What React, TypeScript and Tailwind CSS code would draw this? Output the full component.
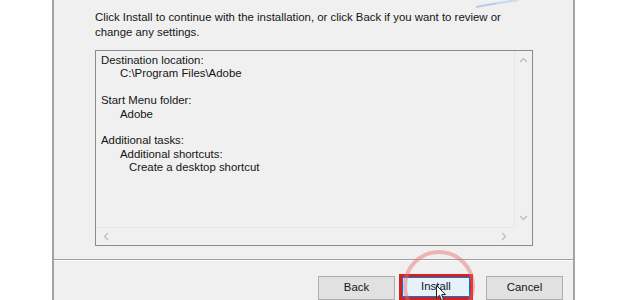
import React from "react";

const lines: { text: string; indent: number }[] = [
  { text: "Destination location:", indent: 0 },
  { text: "C:\\Program Files\\Adobe", indent: 1 },
  { text: "", indent: 0 },
  { text: "Start Menu folder:", indent: 0 },
  { text: "Adobe", indent: 1 },
  { text: "", indent: 0 },
  { text: "Additional tasks:", indent: 0 },
  { text: "Additional shortcuts:", indent: 1 },
  { text: "Create a desktop shortcut", indent: 2 },
];

const indentClass = ["pl-0", "pl-[19px]", "pl-[28px]"];

function Btn({ label, focused }: { label: string; focused?: boolean }) {
  if (focused) {
    return (
      <div className="w-[74px] h-[26px] border-[3px] border-[#d42020] flex">
        <div className="flex-1 bg-[#e5f1fb] border border-[#0078d7] flex items-center justify-center">
          {label}
        </div>
      </div>
    );
  }
  return (
    <div className="w-[77px] h-[24px] mt-[2px] bg-[#e1e1e1] border border-[#adadad] flex items-center justify-center">
      {label}
    </div>
  );
}

export default function App() {
  return (
    <div className="w-[640px] h-[300px] overflow-hidden bg-white flex relative font-['Liberation_Sans',Arial,sans-serif] text-[11.4px] text-[#141414]">
      <div className="w-[52px] shrink-0" />
      <div className="w-[523px] shrink-0 bg-[#f0f0f0] border-l-2 border-r-2 border-[#a3a3a3] flex flex-col">
        <div className="pl-[41px] pr-[20px] pt-[10px] leading-[15px] whitespace-nowrap">
          Click Install to continue with the installation, or click Back if you want to review or
          <br />
          change any settings.
        </div>

        <div className="ml-[41px] mr-[40px] mt-[10px] h-[200px] border border-[#8c8c8c] flex flex-col">
          <div className="flex flex-1 min-h-0">
            <div className="flex-1 pl-[5px] pt-[3px] leading-[13.4px]">
              {lines.map((l, i) => (
                <div key={i} className={`${indentClass[l.indent]} h-[13.4px] whitespace-pre`}>
                  {l.text}
                </div>
              ))}
            </div>
            <div className="w-[18px] border-l border-[#e6e6e6] flex flex-col items-center justify-between py-[6px]">
              <svg width="9" height="6" viewBox="0 0 9 6">
                <path d="M1 5 L4.5 1.5 L8 5" stroke="#bdbdbd" strokeWidth="1.3" fill="none" />
              </svg>
              <svg width="9" height="6" viewBox="0 0 9 6">
                <path d="M1 1 L4.5 4.5 L8 1" stroke="#bdbdbd" strokeWidth="1.3" fill="none" />
              </svg>
            </div>
          </div>
          <div className="h-[18px] flex">
            <div className="flex-1 border-t border-[#e6e6e6] flex items-center justify-between px-[7px]">
              <svg width="6" height="9" viewBox="0 0 6 9">
                <path d="M5 1 L1.5 4.5 L5 8" stroke="#bdbdbd" strokeWidth="1.3" fill="none" />
              </svg>
              <svg width="6" height="9" viewBox="0 0 6 9">
                <path d="M1 1 L4.5 4.5 L1 8" stroke="#bdbdbd" strokeWidth="1.3" fill="none" />
              </svg>
            </div>
            <div className="w-[18px] bg-[#f0f0f0]" />
          </div>
        </div>

        <div className="mt-[13px] border-t border-[#a0a0a0] border-b border-b-white" />

        <div className="flex justify-end pr-[10px] pt-[13px] gap-[4px]">
          <Btn label="Back" />
          <Btn label="Install" focused />
          <div className="w-[5px]" />
          <Btn label="Cancel" />
        </div>
      </div>
      <div className="flex-1" />

      {/* logo fragment at the top */}
      <svg className="absolute left-[472px] top-0" width="50" height="8" viewBox="0 0 50 8">
        <path d="M4 7 C 18 4, 34 2, 46 0" stroke="#b3cce8" strokeWidth="2" fill="none" />
        <path d="M24 4 C 32 3, 40 1, 46 0" stroke="#cfe0f2" strokeWidth="1.5" fill="none" />
      </svg>

      {/* highlight circle round Install */}
      <div className="absolute left-[403px] top-[250px] w-[72px] h-[72px] rounded-full border-[4px] border-[#e66a6a]/45" />

      {/* mouse cursor */}
      <svg className="absolute left-[436px] top-[285px]" width="11" height="17" viewBox="0 0 11 17">
        <path d="M0.5 0.5 L0.5 13 L3.5 10.3 L5.6 15.5 L7.6 14.6 L5.6 9.6 L9.5 9.6 Z" fill="white" stroke="#222" strokeWidth="1" />
      </svg>
    </div>
  );
}
